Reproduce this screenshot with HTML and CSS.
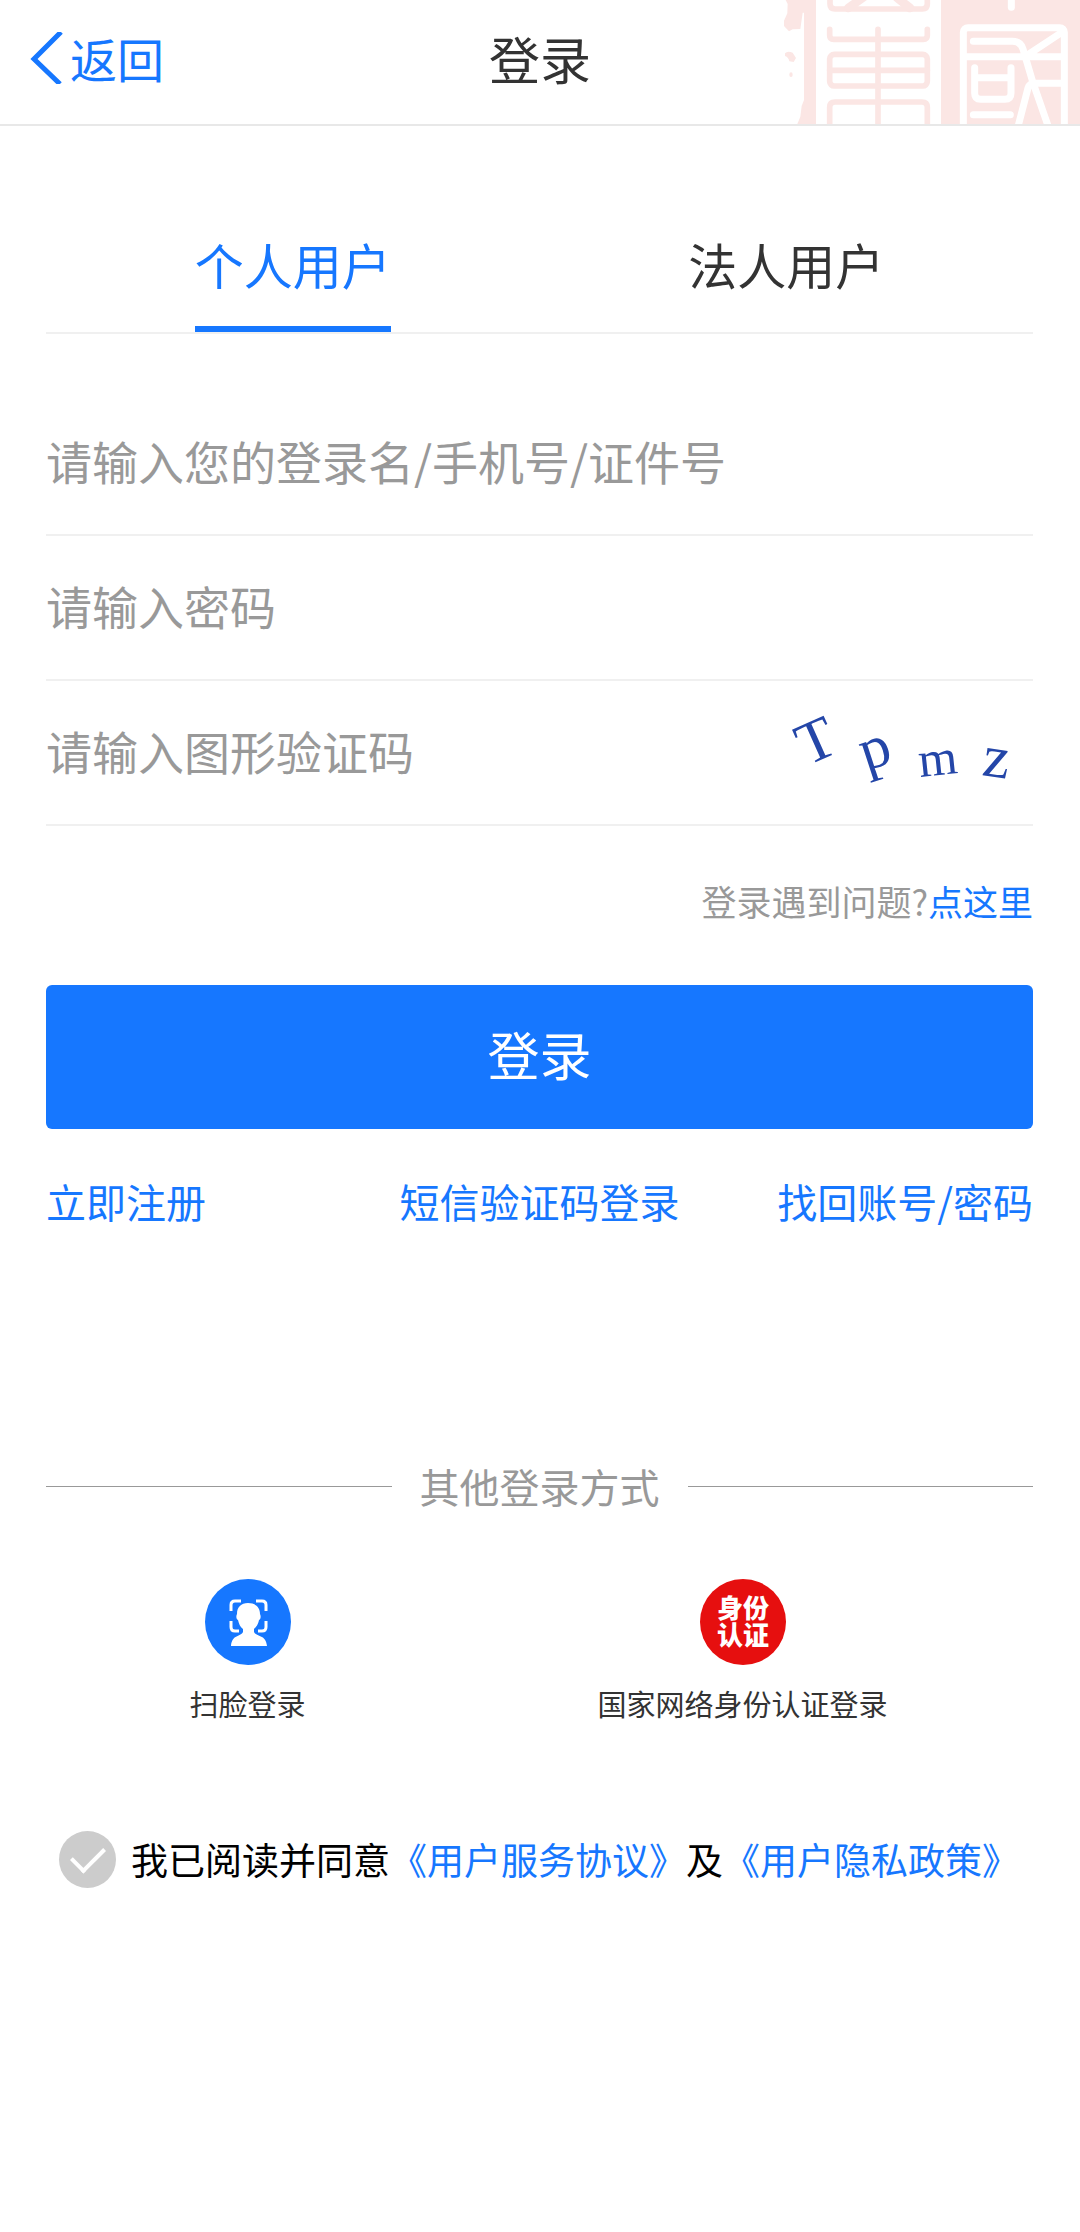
FILE: index.html
```html
<!DOCTYPE html>
<html lang="zh-CN">

<head>
  <meta charset="UTF-8">
  <meta name="viewport" content="width=device-width, initial-scale=1">
  <title>登录</title>
  <link rel="stylesheet" href="styles.css">
</head>

<body>
  <header class="header">
    <a class="back" href="#">
      <svg class="back_icon" viewBox="0 0 34 52" aria-hidden="true">
        <path d="M31 0 L4 27 L30 52" />
      </svg>
      <span>返回</span>
    </a>
    <h1 class="title">登录</h1>
    <!-- Seal pattern -->
    <svg class="seal" viewBox="0 0 1080 372" aria-hidden="true">
      <g class="seal_fill">
        <path d="M197 0 L203 12 L202 40 L192 62 L192 78 L207 94 L218 88 L241 87 L248 38 L252 38 V300 L245 318 L241 350 L232 372 H288 V0 Z" />
        <path d="M195 160 Q202 152 218 158 L228 174 L221 186 L208 184 Q206 172 195 168 Z" />
        <ellipse cx="213" cy="224" rx="5" ry="7" />
        <rect x="663" y="0" width="417" height="372" />
      </g>
      <g class="seal_pink">
        <path d="M330 0 V12 Q330 27 345 27 H607 Q622 27 622 12 V0" />
        <path d="M385 24 L430 -8 M570 24 L530 -8" stroke-width="26" />
        <path d="M329 88 V106 Q329 118 341 118 H610 Q622 118 622 106 V88" />
        <rect x="329" y="163" width="293" height="95" rx="14" />
        <path d="M329 211 H622 M474 88 V372" />
        <path d="M329 385 V322 Q329 306 345 306 H606 Q622 306 622 322 V385" />
      </g>
      <g class="seal_white">
        <path d="M874 0 V22" />
        <rect x="730" y="83" width="303" height="320" rx="14" />
        <path d="M760 124 H878 Q902 124 909 147 L938 245 L985 380" />
        <path d="M1024 98 L918 168 M738 170 H1024" />
        <path d="M894 380 L924 264 Q929 250 944 250 H1024" />
        <path d="M764 203 V280 Q764 298 782 298 H855 Q873 298 873 280 V203 M764 233 H873 M760 344 H871" />
      </g>
    </svg>
  </header>

  <main>
    <form class="login">
      <div class="tabs" role="tablist">
        <button class="tab active" type="button" role="tab" aria-selected="true">个人用户</button>
        <button class="tab" type="button" role="tab" aria-selected="false">法人用户</button>
      </div>

      <div class="fields">
        <div class="field">
          <input type="text" aria-label="登录名" placeholder="请输入您的登录名/手机号/证件号">
        </div>
        <div class="field">
          <input type="password" aria-label="密码" placeholder="请输入密码">
        </div>
        <div class="field">
          <input type="text" aria-label="图形验证码" placeholder="请输入图形验证码">
          <svg class="captcha" viewBox="0 0 260 120">
            <text transform="translate(34 73) rotate(-24)">T</text>
            <text transform="translate(93 78) rotate(-18)">p</text>
            <text transform="translate(147 84) rotate(-6)" class="captcha_small">m</text>
            <text transform="translate(208 82) rotate(8)">z</text>
          </svg>
        </div>
      </div>

      <p class="help">登录遇到问题?<a href="#">点这里</a></p>

      <button class="submit" type="submit">登录</button>

      <nav class="links">
        <a href="#">立即注册</a>
        <a href="#">短信验证码登录</a>
        <a href="#">找回账号/密码</a>
      </nav>

      <div class="divider"><span>其他登录方式</span></div>
    </form>

    <div class="methods">
      <a class="method" href="#">
        <svg class="method_icon" viewBox="0 0 86 86" aria-hidden="true">
          <circle cx="43" cy="43" r="43" fill="#1677ff" />
          <path d="M36 22 H30 Q26 22 26 26 V32 M51 22 H57 Q61 22 61 26 V32 M26 42 V48 Q26 52 30 52 H34 M61 42 V48 Q61 52 57 52 H53" fill="none" stroke="#fff" stroke-width="3" />
          <path d="M43 24 C50 24 55 28 55 35 C56 37 56 40 54 41 C53 46 51 48 49 50 V53 C51 58 61 55 62 67 H26 C27 55 36 58 38 53 V50 C35 48 34 45 33 41 C31 40 31 37 32 35 C32 28 36 24 43 24 Z" fill="#fff" />
        </svg>
        <span>扫脸登录</span>
      </a>
      <a class="method" href="#">
        <svg class="method_icon" viewBox="0 0 86 86" aria-hidden="true">
          <circle cx="43" cy="43" r="43" fill="#e60f0f" />
          <text class="badge_text" x="43" y="39">身份</text>
          <text class="badge_text" x="43" y="66">认证</text>
        </svg>
        <span>国家网络身份认证登录</span>
      </a>
    </div>

    <div class="agreement">
      <input type="checkbox" id="agree">
      <p><label for="agree">我已阅读并同意</label><a href="#">《用户服务协议》</a>及<a href="#">《用户隐私政策》</a></p>
    </div>
  </main>
</body>

</html>
```
FILE: styles.css
```css
* {
  box-sizing: border-box;
}

body {
  margin: 0;
  background: #fff;
  color: #333;
  font-family: "Noto Sans CJK SC", sans-serif;
}

a {
  color: #1677ff;
  text-decoration: none;
}

button,
input {
  margin: 0;
  padding: 0;
  border: none;
  background: none;
  font-family: inherit;
}

p {
  margin: 0;
}

.header {
  display: grid;
  grid-template-columns: 1fr auto 1fr;
  align-items: start;
  border-bottom: 2px solid #e8e8e8;
}

.back {
  display: flex;
  align-items: center;
  gap: 6px;
  padding-left: 30px;
  font-size: 47px;
  line-height: 116px;
}

.back_icon {
  width: 34px;
  height: 52px;
  fill: none;
  stroke: #1677ff;
  stroke-width: 5;
}

.title {
  margin: 0;
  font-size: 51px;
  font-weight: 400;
  line-height: 116px;
}

.seal {
  justify-self: end;
  width: 360px;
  height: 124px;
}

.seal_fill {
  fill: #fbe6e4;
}

.seal_pink {
  fill: none;
  stroke: #fbe6e4;
  stroke-width: 17;
  stroke-linecap: round;
}

.seal_white {
  fill: none;
  stroke: #fff;
  stroke-width: 21;
  stroke-linecap: round;
}

.login {
  padding: 0 47px 0 46px;
}

.tabs {
  display: flex;
  margin-top: 76px;
  border-bottom: 2px solid #f0f0f0;
}

.tab {
  flex: 1;
  color: #333;
  font-size: 49px;
  line-height: 124px;
  cursor: pointer;
}

.tab::after {
  content: "";
  display: block;
  width: 196px;
  height: 6px;
  margin: 0 auto;
}

.tab.active {
  color: #1677ff;
}

.tab.active::after {
  background: #1677ff;
}

.fields {
  margin-top: 57px;
}

.field {
  display: flex;
  align-items: center;
  height: 145px;
  border-bottom: 2px solid #f0f0f0;
}

.field input {
  flex: 1;
  min-width: 0;
  height: 100%;
  padding-bottom: 5px;
  color: #333;
  font-size: 46px;
  outline: none;
}

.field input::placeholder {
  color: #999;
  opacity: 1;
}

.captcha {
  width: 260px;
  height: 120px;
  font-family: "Liberation Serif", serif;
  font-size: 60px;
  fill: #2446a8;
}

.captcha_small {
  font-size: 50px;
}

.help {
  margin-top: 50px;
  color: #999;
  font-size: 35px;
  line-height: 50px;
  text-align: right;
}

.submit {
  display: block;
  width: 100%;
  height: 144px;
  margin-top: 59px;
  padding-bottom: 8px;
  border-radius: 6px;
  background: #1677ff;
  color: #fff;
  font-size: 52px;
  cursor: pointer;
}

.links {
  display: grid;
  grid-template-columns: 1fr auto 1fr;
  margin-top: 42px;
  font-size: 40px;
  line-height: 60px;
}

.links a:last-child {
  text-align: right;
}

.divider {
  display: flex;
  align-items: center;
  gap: 28px;
  margin-top: 225px;
  color: #999;
  font-size: 40px;
  line-height: 60px;
}

.divider::before,
.divider::after {
  content: "";
  flex: 1;
  height: 1px;
  background: #999;
}

.methods {
  display: flex;
  margin-top: 63px;
  padding-right: 90px;
}

.method {
  flex: 1;
  display: flex;
  flex-direction: column;
  align-items: center;
  gap: 18px;
  color: #333;
  font-size: 29px;
  line-height: 40px;
}

.method_icon {
  width: 86px;
  height: 86px;
}

.badge_text {
  fill: #fff;
  font-size: 26px;
  font-weight: 900;
  text-anchor: middle;
}

.agreement {
  display: flex;
  align-items: center;
  gap: 15px;
  margin-top: 108px;
  padding-left: 59px;
  color: #000;
  font-size: 37px;
  line-height: 57px;
}

.agreement input {
  display: grid;
  place-content: center;
  flex: none;
  width: 57px;
  height: 57px;
  border-radius: 50%;
  background: #ccc;
  appearance: none;
  cursor: pointer;
}

/* tick */
.agreement input::before {
  content: "";
  width: 28px;
  height: 15px;
  margin-bottom: 8px;
  border: solid #fff;
  border-width: 0 0 4px 4px;
  transform: rotate(-45deg);
}

.agreement input:checked {
  background: #1677ff;
}
```
